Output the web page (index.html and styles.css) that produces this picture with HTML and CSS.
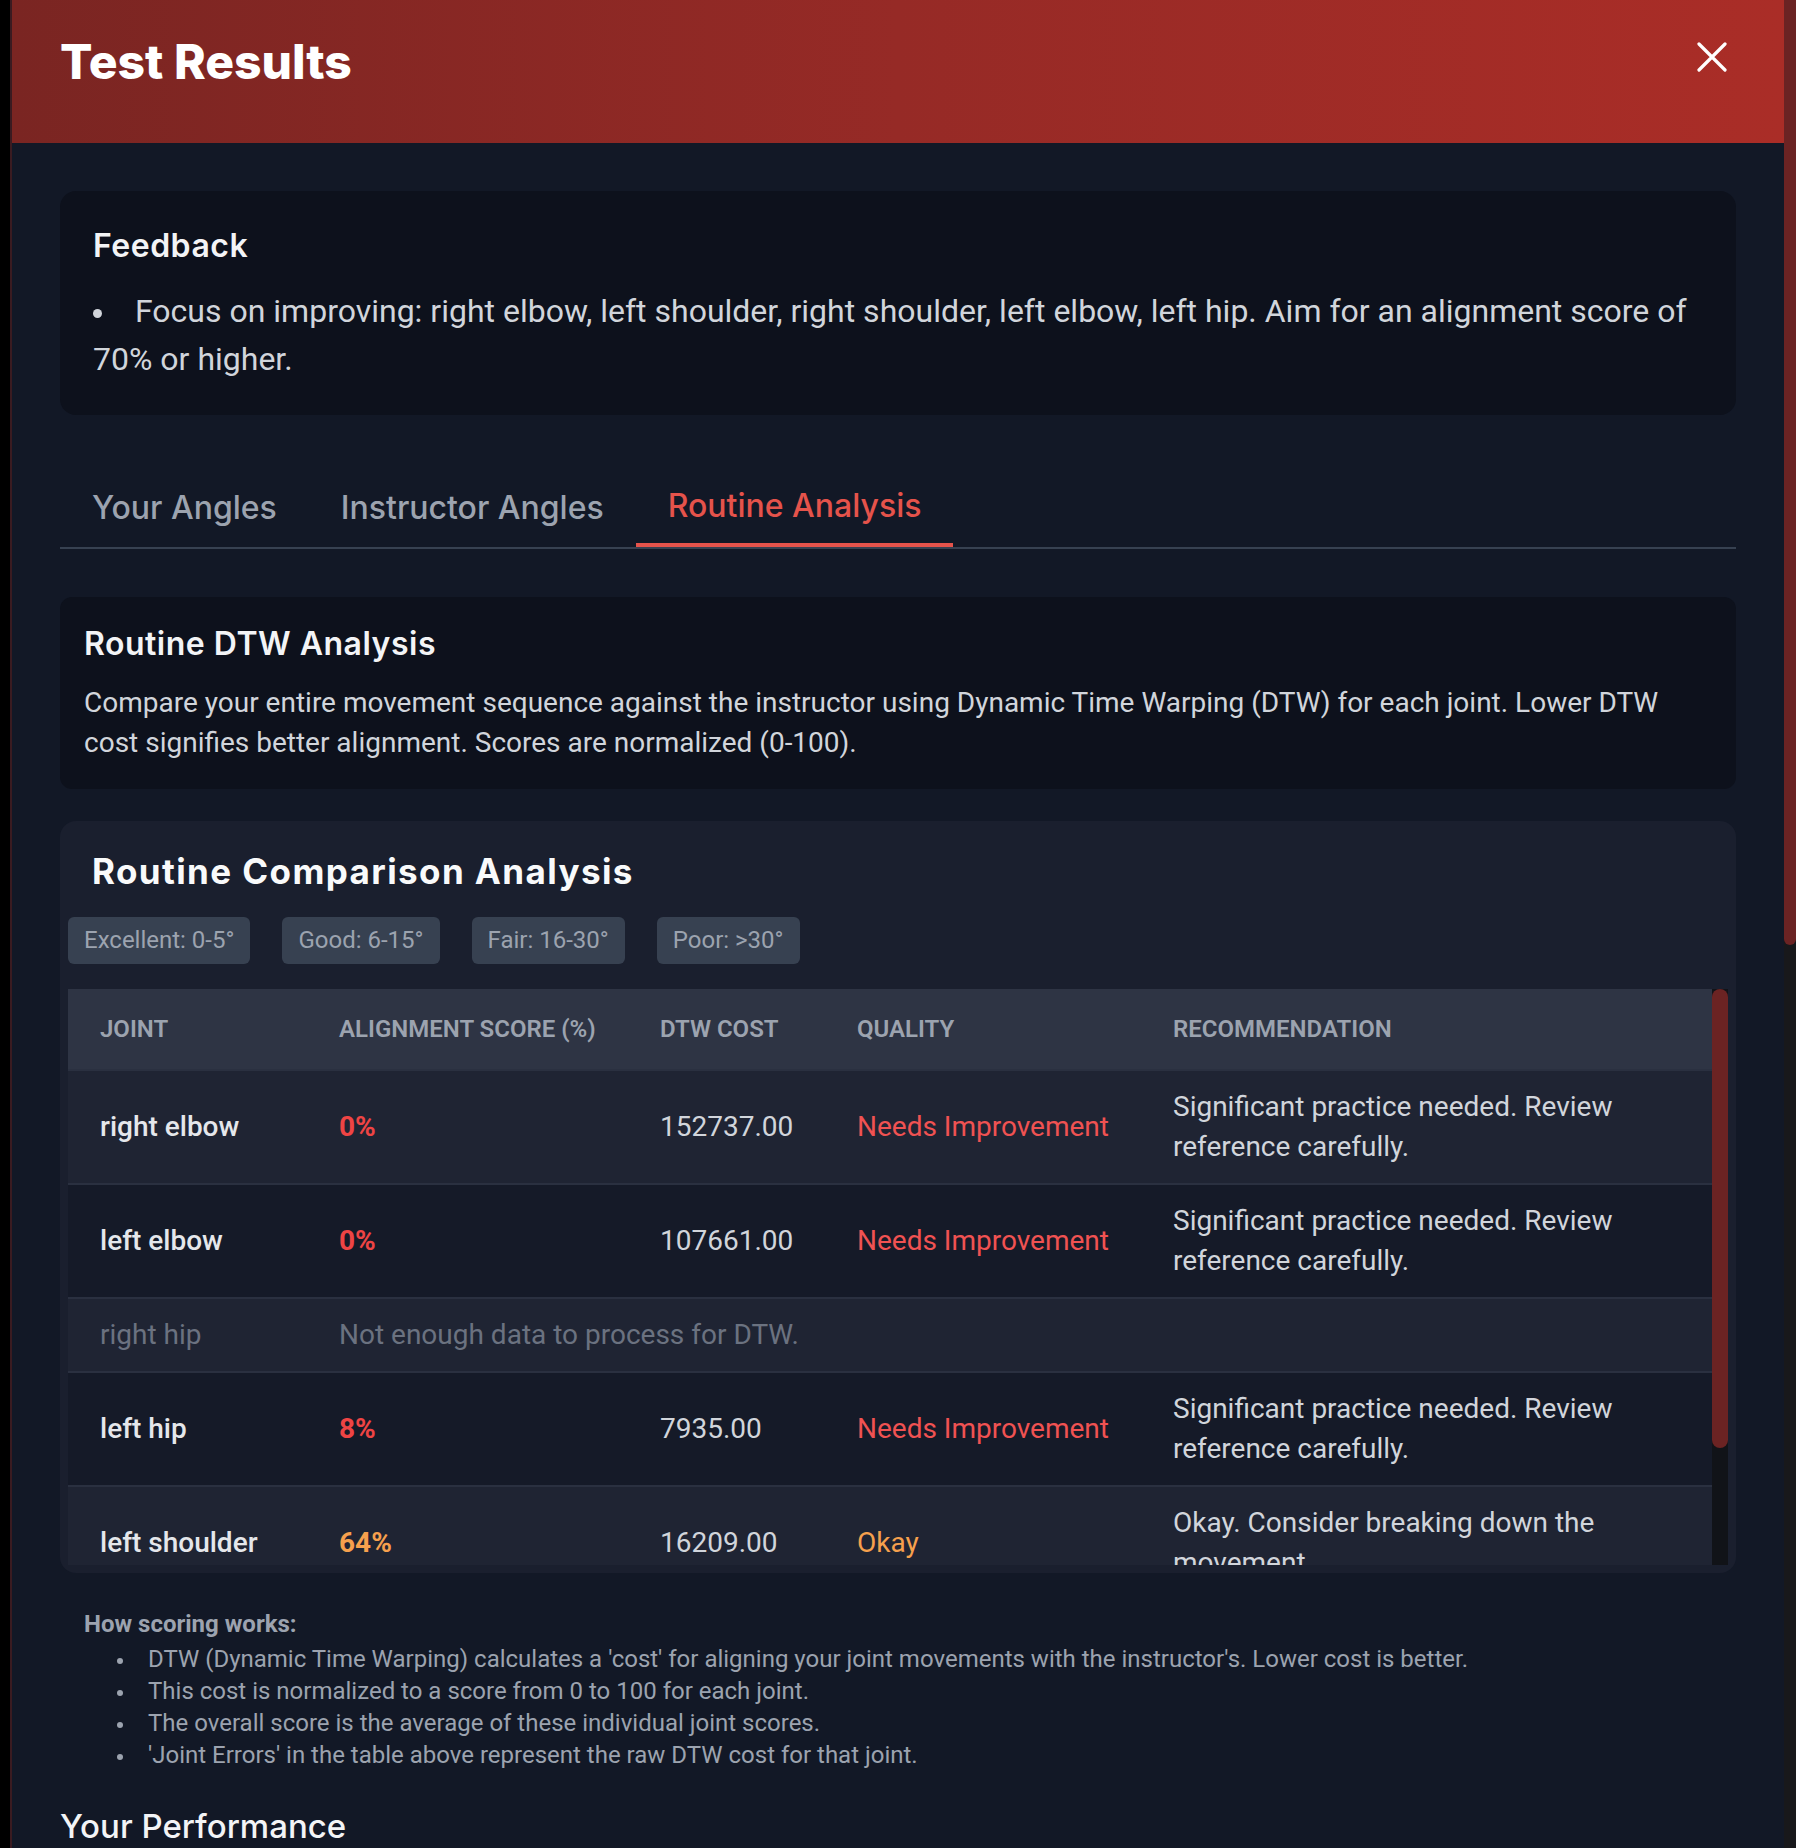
FILE: index.html
```html
<!DOCTYPE html>
<html lang="en">
<head>
<meta charset="utf-8">
<title>Test Results</title>
<link rel="stylesheet" href="styles.css">
</head>
<body>
<div class="modal">
  <header class="modal-header">
    <h1 class="modal-title">Test Results</h1>
    <button class="close-btn" aria-label="Close">
      <svg viewBox="0 0 30 30" width="30" height="30"><path d="M2 2 L28 28 M28 2 L2 28" stroke="#fff" stroke-width="3.2" stroke-linecap="round" fill="none"/></svg>
    </button>
  </header>
  <main class="modal-body">
    <section class="card feedback">
      <h2 class="feedback-title">Feedback</h2>
      <ul class="feedback-list">
        <li>Focus on improving: right elbow, left shoulder, right shoulder, left elbow, left hip. Aim for an alignment score of 70% or higher.</li>
      </ul>
    </section>

    <nav class="tabs">
      <button class="tab">Your Angles</button>
      <button class="tab">Instructor Angles</button>
      <button class="tab active">Routine Analysis</button>
    </nav>

    <section class="card dtw">
      <h3 class="dtw-title">Routine DTW Analysis</h3>
      <p class="dtw-desc">Compare your entire movement sequence against the instructor using Dynamic Time Warping (DTW) for each joint. Lower DTW cost signifies better alignment. Scores are normalized (0-100).</p>
    </section>

    <section class="compare">
      <h3 class="compare-title">Routine Comparison Analysis</h3>
      <div class="legend">
        <span class="chip">Excellent: 0-5°</span>
        <span class="chip">Good: 6-15°</span>
        <span class="chip">Fair: 16-30°</span>
        <span class="chip">Poor: &gt;30°</span>
      </div>
      <div class="table-frame">
        <div class="table-viewport">
          <table class="results">
            <colgroup>
              <col class="c1"><col class="c2"><col class="c3"><col class="c4"><col class="c5">
            </colgroup>
            <thead>
              <tr><th>Joint</th><th>Alignment Score (%)</th><th>DTW Cost</th><th>Quality</th><th>Recommendation</th></tr>
            </thead>
            <tbody>
              <tr class="odd">
                <td class="joint">right elbow</td><td class="score bad">0%</td><td class="cost">152737.00</td><td class="quality bad-q">Needs Improvement</td><td class="rec">Significant practice needed. Review reference carefully.</td>
              </tr>
              <tr class="even">
                <td class="joint">left elbow</td><td class="score bad">0%</td><td class="cost">107661.00</td><td class="quality bad-q">Needs Improvement</td><td class="rec">Significant practice needed. Review reference carefully.</td>
              </tr>
              <tr class="odd nodata">
                <td class="joint">right hip</td><td colspan="4">Not enough data to process for DTW.</td>
              </tr>
              <tr class="even">
                <td class="joint">left hip</td><td class="score bad">8%</td><td class="cost">7935.00</td><td class="quality bad-q">Needs Improvement</td><td class="rec">Significant practice needed. Review reference carefully.</td>
              </tr>
              <tr class="odd">
                <td class="joint">left shoulder</td><td class="score ok">64%</td><td class="cost">16209.00</td><td class="quality ok-q">Okay</td><td class="rec">Okay. Consider breaking down the movement.</td>
              </tr>
            </tbody>
          </table>
        </div>
        <div class="vscroll"><div class="vthumb"></div></div>
      </div>
    </section>

    <section class="scoring">
      <h4 class="scoring-title">How scoring works:</h4>
      <ul class="scoring-list">
        <li>DTW (Dynamic Time Warping) calculates a 'cost' for aligning your joint movements with the instructor's. Lower cost is better.</li>
        <li>This cost is normalized to a score from 0 to 100 for each joint.</li>
        <li>The overall score is the average of these individual joint scores.</li>
        <li>'Joint Errors' in the table above represent the raw DTW cost for that joint.</li>
      </ul>
    </section>

    <h3 class="perf-title">Your Performance</h3>
  </main>
</div>
<div class="page-scrollbar"><div class="page-thumb"></div></div>
</body>
</html>
```

FILE: styles.css
```css
* { box-sizing: border-box; }

html, body {
  margin: 0;
  padding: 0;
}

body {
  background: #000;
  display: flex;
  height: 1848px;
  overflow: hidden;
  font-family: Roboto, "Liberation Sans", Arial, sans-serif;
  color: #d1d5db;
}

.modal {
  flex: 1;
  margin-left: 10px;
  border-left: 2px solid #3a1b21;
  background: #121826;
  min-width: 0;
}

.modal-header {
  height: 143px;
  display: flex;
  justify-content: space-between;
  align-items: flex-start;
  padding: 38px 48px 0 48px;
  background: linear-gradient(to right, #7a2522 0%, #962a26 50%, #aa2d27 100%);
}

.modal-title {
  margin: 0;
  font-family: Inter, "Liberation Sans", sans-serif;
  font-weight: 800;
  font-size: 48px;
  line-height: 48px;
  color: #fff;
}

.close-btn {
  width: 48px;
  height: 30px;
  margin-top: 4px;
  padding: 0;
  border: 0;
  background: transparent;
  display: flex;
  align-items: center;
  justify-content: center;
  cursor: pointer;
}

.modal-body {
  padding: 48px;
}

.card {
  background: #0d111c;
  border-radius: 16px;
}

.feedback {
  padding: 36px 32px 32px 33px;
}

.feedback-title {
  margin: 0 0 22px 0;
  font-family: Inter, "Liberation Sans", sans-serif;
  font-weight: 600;
  font-size: 32px;
  line-height: 38px;
  letter-spacing: 0.5px;
  color: #f3f4f6;
}

.feedback-list {
  list-style: none;
  margin: 0;
  padding: 0;
}

.feedback-list li {
  font-size: 32px;
  line-height: 48px;
  color: #d1d5db;
}

.feedback-list li::before {
  content: "";
  display: inline-block;
  width: 9px;
  height: 9px;
  border-radius: 50%;
  background: #d1d5db;
  margin-right: 33px;
  vertical-align: middle;
}

.tabs {
  display: flex;
  align-items: flex-end;
  margin-top: 48px;
  border-bottom: 2px solid #374151;
}

.tab {
  font-family: Inter, "Liberation Sans", sans-serif;
  font-size: 32px;
  font-weight: 500;
  line-height: 40px;
  color: #9ca3af;
  background: transparent;
  border: 0;
  border-bottom: 2px solid transparent;
  padding: 23px 32px 17px 32px;
  cursor: pointer;
}

.tab.active {
  color: #e5534b;
  border-bottom: 4px solid #e5534b;
}

.dtw {
  margin-top: 48px;
  padding: 28px 24px 26px 24px;
  border-radius: 12px;
}

.dtw-title {
  margin: 0 0 20px 0;
  font-family: Inter, "Liberation Sans", sans-serif;
  font-weight: 600;
  font-size: 32px;
  line-height: 38px;
  letter-spacing: 0.5px;
  color: #f3f4f6;
}

.dtw-desc {
  margin: 0;
  font-size: 28px;
  line-height: 40px;
  color: #d1d5db;
}

.compare {
  margin-top: 32px;
  background: #1a1f2e;
  border-radius: 16px;
  padding: 8px;
}

.compare-title {
  margin: 0;
  padding: 20px 24px 0 24px;
  font-family: Inter, "Liberation Sans", sans-serif;
  font-weight: 700;
  font-size: 35px;
  line-height: 44px;
  letter-spacing: 1.4px;
  color: #f9fafb;
}

.legend {
  display: flex;
  gap: 32px;
  margin-top: 24px;
}

.chip {
  background: #374151;
  color: #9ca3af;
  font-size: 24px;
  line-height: 31px;
  padding: 8px 16px;
  border-radius: 6px;
}

.table-frame {
  margin-top: 25px;
  height: 576px;
  display: flex;
  overflow: hidden;
}

.table-viewport {
  flex: 1;
  min-width: 0;
  overflow: hidden;
}

.vscroll {
  flex: 0 0 16px;
  width: 16px;
  background: #111318;
}

.vthumb {
  height: 459px;
  background: #6b2323;
  border-radius: 8px;
}

.results {
  width: 100%;
  border-collapse: collapse;
  table-layout: fixed;
}

.c1 { width: 239px; }
.c2 { width: 321px; }
.c3 { width: 197px; }
.c4 { width: 316px; }

.results th {
  background: #2e3444;
  color: #9ca3af;
  text-transform: uppercase;
  text-align: left;
  font-size: 24px;
  font-weight: 600;
  line-height: 32px;
  padding: 24px 32px;
}

.results td {
  padding: 16px 32px;
  font-size: 28px;
  line-height: 40px;
  vertical-align: middle;
  color: #d1d5db;
}

.results tbody tr {
  border-top: 2px solid #2a3040;
}

.results tr.odd { background: #1f2433; }
.results tr.even { background: #151a28; }

.results td.joint {
  color: #e5e7eb;
  font-weight: 500;
}

.results td.score { font-weight: 700; }
.results td.score.bad { color: #ef4444; }
.results td.score.ok { color: #f6a04d; }
.results td.quality.bad-q { color: #f05252; }
.results td.quality.ok-q { color: #f6a04d; }

.results tr.nodata td {
  color: #6b7280;
  font-weight: 400;
}

.scoring {
  margin-top: 11px;
  padding: 24px;
}

.scoring-title {
  margin: 0 0 3px 0;
  font-size: 24px;
  line-height: 32px;
  font-weight: 700;
  color: #9ca3af;
}

.scoring-list {
  list-style: none;
  margin: 0;
  padding-left: 64px;
  font-size: 24px;
  line-height: 32px;
  color: #9ca3af;
}

.scoring-list li::before {
  content: "";
  display: inline-block;
  width: 6px;
  height: 6px;
  border-radius: 50%;
  background: #9ca3af;
  margin-left: -31px;
  margin-right: 25px;
  vertical-align: middle;
}

.perf-title {
  margin: 11px 0 0 0;
  font-family: Inter, "Liberation Sans", sans-serif;
  font-weight: 500;
  font-size: 33px;
  line-height: 40px;
  color: #f3f4f6;
}

.page-scrollbar {
  width: 12px;
  flex: 0 0 12px;
  background: #18181b;
}

.page-thumb {
  height: 945px;
  background: #6b2323;
  border-radius: 0 0 6px 6px;
}
```
